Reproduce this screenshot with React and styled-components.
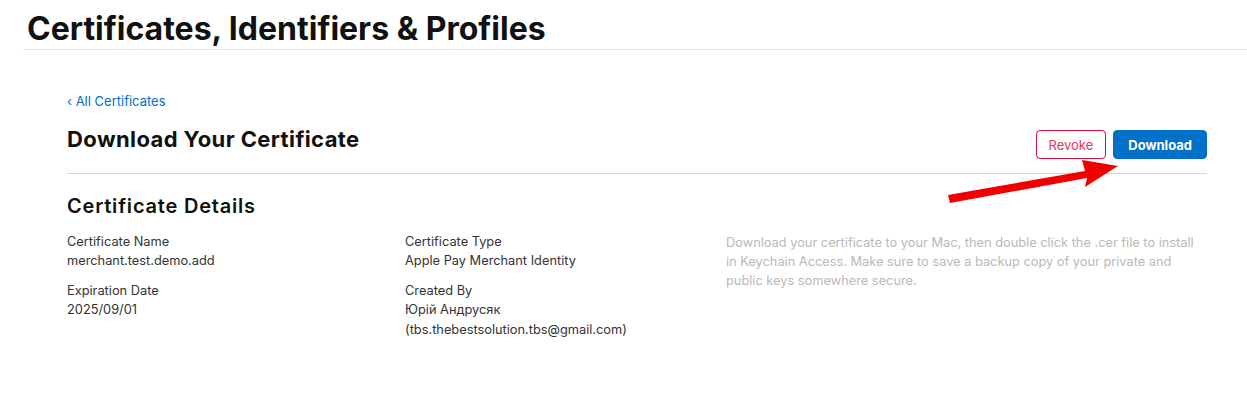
import React from 'react';
import styled, { createGlobalStyle } from 'styled-components';

const GlobalStyle = createGlobalStyle`
  body {
    margin: 0;
    background: #fff;
    font-family: Inter, "Noto Sans", "Liberation Sans", sans-serif;
    color: #1d1d1f;
  }
`;

const Page = styled.div`
  position: relative;
  width: 1247px;
  height: 402px;
  overflow: hidden;
`;

const Header = styled.header`
  margin-left: 23px;
  padding: 9px 0 0 4px;
  height: 40px;
  border-bottom: 1px solid #e3e3e3;
`;

const PageTitle = styled.h1`
  margin: 0;
  font-size: 32px;
  line-height: 40px;
  font-weight: 700;
  color: #111;
`;

const Content = styled.main`
  padding: 42px 40px 0 67px;
`;

const BackLink = styled.a`
  display: block;
  font-size: 13px;
  line-height: 18px;
  color: #0070c9;
  text-decoration: none;
`;

const TopRow = styled.div`
  display: flex;
  justify-content: space-between;
  align-items: flex-start;
  padding: 15px 0 14px;
  border-bottom: 1px solid #d6d6d6;
`;

const Heading = styled.h2`
  margin: 0;
  font-size: 22px;
  line-height: 28px;
  font-weight: 700;
  letter-spacing: 0.4px;
  color: #111;
`;

const Actions = styled.div`
  display: flex;
  gap: 7px;
  padding-top: 5px;
`;

const Button = styled.button`
  height: 29px;
  padding: 0 ${(p) => (p.primary ? '14px' : '12px')};
  border-radius: 4px;
  font-family: inherit;
  font-size: 13px;
  font-weight: ${(p) => (p.primary ? 700 : 400)};
  border: 1px solid ${(p) => (p.primary ? '#0070c9' : '#d30f3d')};
  background: ${(p) => (p.primary ? '#0070c9' : '#fff')};
  color: ${(p) => (p.primary ? '#fff' : '#e3365d')};
  cursor: pointer;
`;

const SectionTitle = styled.h3`
  margin: 19px 0 0;
  font-size: 20px;
  line-height: 26px;
  font-weight: 600;
  letter-spacing: 0.8px;
  color: #111;
`;

const Details = styled.div`
  display: grid;
  grid-template-columns: 338px 321px 1fr;
  margin-top: 14px;
`;

const Column = styled.div`
  display: flex;
  flex-direction: column;
  gap: 11px;
`;

const Field = styled.div`
  font-size: 12.8px;
  color: #333;
`;

const Label = styled.div`
  line-height: 18px;
`;

const Value = styled.div`
  line-height: 20px;
`;

const Note = styled.p`
  margin: 0;
  max-width: 480px;
  font-size: 12.8px;
  line-height: 19px;
  color: #b9b9b9;
`;

const Arrow = styled.svg`
  position: absolute;
  left: 940px;
  top: 150px;
  pointer-events: none;
`;

const DetailField = ({ label, children }) => (
  <Field>
    <Label>{label}</Label>
    <Value>{children}</Value>
  </Field>
);

export default function App() {
  return (
    <Page>
      <GlobalStyle />
      <Header>
        <PageTitle>Certificates, Identifiers &amp; Profiles</PageTitle>
      </Header>
      <Content>
        <BackLink href="#">‹ All Certificates</BackLink>
        <TopRow>
          <Heading>Download Your Certificate</Heading>
          <Actions>
            <Button>Revoke</Button>
            <Button primary>Download</Button>
          </Actions>
        </TopRow>
        <SectionTitle>Certificate Details</SectionTitle>
        <Details>
          <Column>
            <DetailField label="Certificate Name">merchant.test.demo.add</DetailField>
            <DetailField label="Expiration Date">2025/09/01</DetailField>
          </Column>
          <Column>
            <DetailField label="Certificate Type">Apple Pay Merchant Identity</DetailField>
            <DetailField label="Created By">
              Юрій Андрусяк
              <br />
              (tbs.thebestsolution.tbs@gmail.com)
            </DetailField>
          </Column>
          <Column>
            <Note>
              Download your certificate to your Mac, then double click the .cer file to install
              in Keychain Access. Make sure to save a backup copy of your private and
              public keys somewhere secure.
            </Note>
          </Column>
        </Details>
      </Content>
      <Arrow width="190" height="60" viewBox="0 0 190 60">
        <polygon
          points="8,45 145,21 142,10 178,16 145,37 147,28 10,53"
          fill="#f20000"
        />
      </Arrow>
    </Page>
  );
}
